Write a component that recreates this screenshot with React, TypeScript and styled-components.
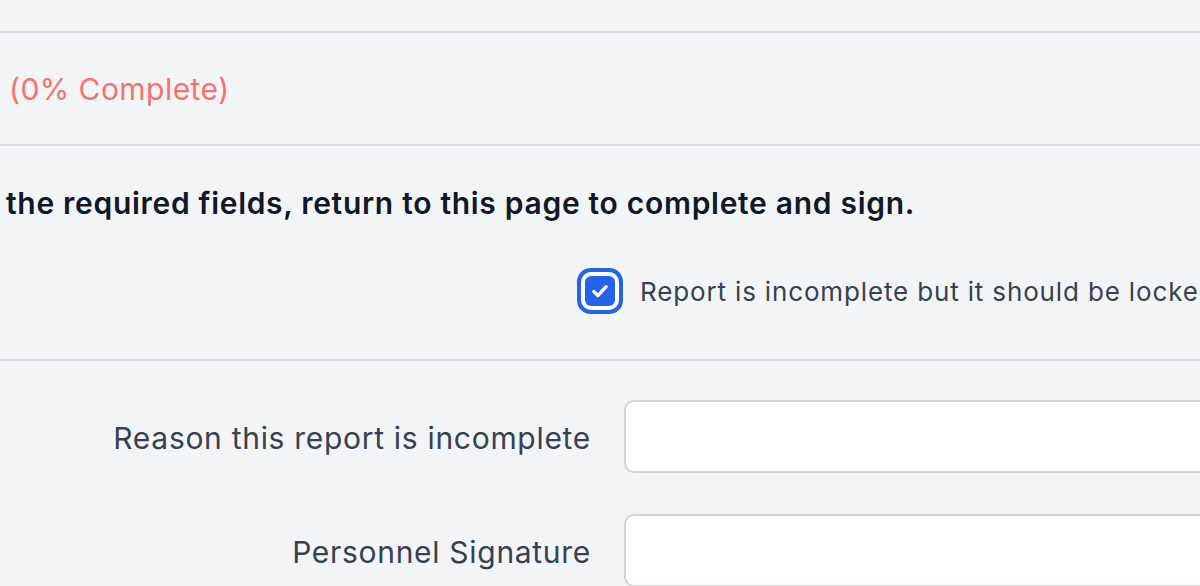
import React, { useState } from "react";
import styled, { createGlobalStyle } from "styled-components";

const GlobalStyle = createGlobalStyle`
  html, body {
    margin: 0;
    padding: 0;
    background: #f3f4f6;
    overflow: hidden;
  }
  body {
    font-family: Inter, "Noto Sans", sans-serif;
    -webkit-font-smoothing: antialiased;
  }
`;

const Page = styled.div`
  width: 1200px;
  height: 586px;
  background: #f3f4f6;
  overflow: hidden;
`;

const TopStrip = styled.div`
  height: 31px;
  border-bottom: 2px solid #d9dbe0;
`;

const ProgressSection = styled.div`
  height: 111px;
  display: flex;
  align-items: center;
  padding-left: 9px;
  border-bottom: 2px solid #d9dbe0;
`;

const Progress = styled.span`
  font-size: 30px;
  letter-spacing: 0.45px;
  color: #f87171;
`;

const NoticeSection = styled.div`
  height: 213px;
  padding: 0 0 0 6px;
  border-bottom: 2px solid #d9dbe0;
  display: flex;
  flex-direction: column;
`;

const Notice = styled.p`
  margin: 0;
  padding-top: 38px;
  font-size: 30px;
  letter-spacing: 0.7px;
  font-weight: 600;
  color: #111827;
  line-height: 38px;
`;

const CheckRow = styled.label`
  display: flex;
  align-items: center;
  gap: 17px;
  margin-top: 46px;
  margin-left: 571px;
  white-space: nowrap;
  cursor: pointer;
`;

const CheckBox = styled.span<{ $checked: boolean }>`
  flex: none;
  width: 30px;
  height: 30px;
  border-radius: 6px;
  background: ${(p) => (p.$checked ? "#2563eb" : "#fff")};
  box-shadow: 0 0 0 4px #fff, 0 0 0 8px #2563eb;
  margin: 8px;
  display: flex;
  align-items: center;
  justify-content: center;
`;

const CheckText = styled.span`
  font-size: 26px;
  letter-spacing: 0.85px;
  color: #374151;
`;

const FormSection = styled.div`
  display: grid;
  grid-template-columns: 591px 700px;
  column-gap: 33px;
  row-gap: 41px;
  padding-top: 39px;
  align-items: center;
`;

const Label = styled.div`
  text-align: right;
  font-size: 30px;
  letter-spacing: 0.7px;
  color: #374151;
  padding-top: 3px;
`;

const Input = styled.input`
  box-sizing: border-box;
  height: 73px;
  width: 100%;
  border: 2px solid #d1d5db;
  border-radius: 10px;
  background: #fff;
  font-size: 28px;
  font-family: inherit;
  padding: 0 20px;
  outline: none;
`;

export default function App() {
  const [locked, setLocked] = useState(true);

  return (
    <>
      <GlobalStyle />
      <Page>
        <TopStrip />
        <ProgressSection>
          <Progress>(0% Complete)</Progress>
        </ProgressSection>
        <NoticeSection>
          <Notice>the required fields, return to this page to complete and sign.</Notice>
          <CheckRow onClick={() => setLocked(!locked)}>
            <CheckBox $checked={locked}>
              {locked && (
                <svg width="26" height="26" viewBox="0 0 16 16" fill="none">
                  <path
                    d="M4.2 8.3l2.5 2.5 5.1-5.5"
                    stroke="#fff"
                    strokeWidth="2"
                    strokeLinecap="round"
                    strokeLinejoin="round"
                  />
                </svg>
              )}
            </CheckBox>
            <CheckText>Report is incomplete but it should be locked</CheckText>
          </CheckRow>
        </NoticeSection>
        <FormSection>
          <Label>Reason this report is incomplete</Label>
          <Input type="text" />
          <Label>Personnel Signature</Label>
          <Input type="text" />
        </FormSection>
      </Page>
    </>
  );
}
